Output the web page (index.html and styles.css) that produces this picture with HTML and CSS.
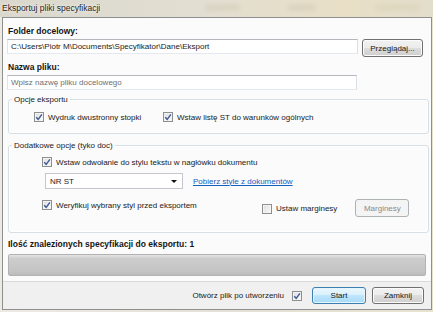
FILE: index.html
```html
<!DOCTYPE html>
<html lang="pl">
<head>
    <meta charset="utf-8">
    <title>Eksportuj pliki specyfikacji</title>
    <link rel="stylesheet" href="styles.css">
</head>
<body>
    <div class="window">
        <div class="titlebar">
            <span class="title">Eksportuj pliki specyfikacji</span>
            <span class="blur blur-1"></span>
            <span class="blur blur-2"></span>
            <span class="blur blur-3"></span>
        </div>
        <div class="client">
            <div class="main">
                <div class="label">Folder docelowy:</div>
                <div class="path-row">
                    <input type="text" class="textbox path" value="C:\Users\Piotr M\Documents\Specyfikator\Dane\Eksport">
                    <button class="btn browse">Przeglądaj...</button>
                </div>

                <div class="label">Nazwa pliku:</div>
                <input type="text" class="textbox name" placeholder="Wpisz nazwę pliku docelowego">

                <!-- Opcje eksportu -->
                <fieldset class="group export">
                    <legend>Opcje eksportu</legend>
                    <div class="group-body">
                        <div class="export-row">
                            <label class="check duplex"><span class="box checked"><svg viewBox="0 0 8 8"><path d="M1.2 4.2 L3.2 6.3 L6.9 1.4"/></svg></span>Wydruk dwustronny stopki</label>
                            <label class="check"><span class="box checked"><svg viewBox="0 0 8 8"><path d="M1.2 4.2 L3.2 6.3 L6.9 1.4"/></svg></span>Wstaw listę ST do warunków ogólnych</label>
                        </div>
                    </div>
                </fieldset>

                <!-- Dodatkowe opcje -->
                <fieldset class="group extra">
                    <legend>Dodatkowe opcje (tyko doc)</legend>
                    <div class="group-body">
                        <label class="check"><span class="box checked"><svg viewBox="0 0 8 8"><path d="M1.2 4.2 L3.2 6.3 L6.9 1.4"/></svg></span>Wstaw odwołanie do stylu tekstu w nagłówku dokumentu</label>
                        <div class="style-row">
                            <div class="combo">
                                <span>NR ST</span>
                                <span class="arrow"></span>
                            </div>
                            <a href="#" class="link">Pobierz style z dokumentów</a>
                        </div>
                        <div class="verify-row">
                            <label class="check verify"><span class="box checked"><svg viewBox="0 0 8 8"><path d="M1.2 4.2 L3.2 6.3 L6.9 1.4"/></svg></span>Weryfikuj wybrany styl przed eksportem</label>
                            <label class="check margins"><span class="box"></span>Ustaw marginesy</label>
                            <button class="btn disabled margins-btn">Marginesy</button>
                        </div>
                    </div>
                </fieldset>

                <div class="label count">Ilość znalezionych specyfikacji do eksportu: 1</div>
                <div class="progress"></div>
            </div>

            <div class="footer">
                <label class="check open-after">Otwórz plik po utworzeniu<span class="box checked"><svg viewBox="0 0 8 8"><path d="M1.2 4.2 L3.2 6.3 L6.9 1.4"/></svg></span></label>
                <button class="btn default start">Start</button>
                <button class="btn close">Zamknij</button>
            </div>
        </div>
    </div>
</body>
</html>
```

FILE: styles.css
```css
/* Okno dialogowe - styl Windows 7 */

body {
    margin: 0;
    font-family: "Liberation Sans", Arial, sans-serif;
    font-size: 8px;
    color: #1a1a1a;
    background: #e6e3da;
}

.window {
    width: 433px;
    height: 312px;
    display: flex;
    flex-direction: column;
    overflow: hidden;
    background: linear-gradient(to right, #eceae3, #e4e1d7 50%, #e8e2cf);
}

.titlebar {
    position: relative;
    height: 17px;
    line-height: 17px;
    padding-left: 2px;
    font-size: 8.5px;
    color: #262626;
    background: linear-gradient(to right, #dad7cd, #e2ded2 45%, #e8dfc6 80%, #e3ddcc);
    overflow: hidden;
}

.title {
    position: relative;
    z-index: 1;
    text-shadow: 0 0 4px #f4f2ec, 0 0 2px #f4f2ec;
}

/* rozmyte tlo szkla Aero */
.blur {
    position: absolute;
    top: 4px;
    height: 7px;
    border-radius: 4px;
    background: #cfc8b4;
    filter: blur(2px);
    opacity: 0.45;
}

.blur-1 { left: 205px; width: 35px; }
.blur-2 { left: 288px; width: 28px; }
.blur-3 { left: 375px; width: 45px; background: #d8cfb4; }

.client {
    flex: 1;
    margin: 0 1px 2px 2px;
    border: 1px solid #8d8f91;
    display: flex;
    flex-direction: column;
    background: #fbfbfb;
}

.main {
    flex: 1;
    padding: 8px 2px 0 4px;
}

.label {
    font-weight: bold;
    font-size: 8.5px;
    line-height: 11px;
    padding-left: 1px;
    color: #141414;
}

.path-row {
    display: flex;
    align-items: flex-start;
    margin-top: 2px;
}

.textbox {
    display: block;
    box-sizing: border-box;
    height: 15px;
    margin: 0;
    padding: 0 3px;
    border: 1px solid;
    border-color: #b5b7bd #dbdfe6 #e3e9ef #e2e3ea;
    background: #fff;
    font-family: inherit;
    font-size: 8px;
    color: #1a1a1a;
    outline: none;
}

.textbox::placeholder {
    color: #6f6f6f;
}

.path {
    width: 351px;
}

.name {
    width: 350px;
    margin-top: 2px;
}

.path-row + .label {
    margin-top: 5px;
}

.btn {
    box-sizing: border-box;
    height: 18px;
    padding: 0;
    border: 1px solid #707070;
    border-radius: 3px;
    background: linear-gradient(#f2f2f2 0%, #ebebeb 50%, #dddddd 50%, #cfcfcf 100%);
    box-shadow: inset 0 0 0 1px #fbfbfb;
    font-family: inherit;
    font-size: 8px;
    color: #1a1a1a;
}

.browse {
    width: 61px;
    margin-left: 4px;
}

.group {
    margin: 4px 0 0 1px;
    padding: 0;
    border: 1px solid #d5dfe5;
    border-radius: 3px;
    box-shadow: inset 0 0 0 1px #fff;
}

.group legend {
    margin-left: 3px;
    padding: 0 2px;
    line-height: 11px;
    font-size: 8px;
}

.check {
    display: flex;
    align-items: center;
    height: 12px;
    white-space: nowrap;
}

.box {
    box-sizing: border-box;
    flex: none;
    width: 10px;
    height: 10px;
    margin-right: 4px;
    border: 1px solid #8e8f8f;
    background: linear-gradient(135deg, #dcdcdc, #fbfbfb);
    box-shadow: inset 0 0 0 1px #f4f4f4;
}

.box svg {
    display: block;
    width: 8px;
    height: 8px;
}

.box svg path {
    fill: none;
    stroke: #3d5a94;
    stroke-width: 1.4;
}

.export .group-body {
    padding: 6px 0 10px 25px;
}

.export-row {
    display: flex;
}

.duplex {
    width: 129px;
}

.extra {
    margin-top: 6px;
}

.extra .group-body {
    padding: 5px 0 15px 33px;
}

.style-row {
    display: flex;
    align-items: center;
    margin: 5px 0 0 3px;
}

.combo {
    box-sizing: border-box;
    width: 138px;
    height: 16px;
    display: flex;
    align-items: center;
    justify-content: space-between;
    padding: 0 5px 0 4px;
    border: 1px solid #c3c6cc;
    background: #fff;
}

.arrow {
    width: 0;
    height: 0;
    border-left: 3px solid transparent;
    border-right: 3px solid transparent;
    border-top: 3px solid #111;
}

.link {
    margin-left: 10px;
    color: #1560c0;
    text-decoration: underline;
}

.verify-row {
    display: flex;
    align-items: center;
    height: 18px;
    margin-top: 10px;
}

.verify {
    align-self: flex-start;
    width: 220px;
}

.margins {
    margin-top: 1px;
}

.margins-btn {
    width: 54px;
    margin-left: 18px;
}

.btn.disabled {
    border-color: #adb2b5;
    background: #f4f4f4;
    box-shadow: none;
    color: #8a8a8a;
}

.count {
    margin-top: 6px;
}

.progress {
    box-sizing: border-box;
    height: 22px;
    margin: 4px 3px 0 1px;
    border: 1px solid #b2b2b2;
    border-radius: 2px;
    background: linear-gradient(#e4e4e4 0%, #cdcdcd 18%, #c4c4c4 80%, #bbbbbb 100%);
}

.footer {
    height: 27px;
    display: flex;
    align-items: center;
    justify-content: flex-end;
    padding-right: 7px;
    border-top: 1px solid #dadada;
    background: #f0f0f0;
}

.open-after .box {
    margin: 0 0 0 8px;
}

.start {
    width: 54px;
    height: 17px;
    margin-left: 10px;
    border-color: #3c7fb1;
    background: linear-gradient(#eaf6fd 0%, #d9f0fc 50%, #bee6fd 50%, #a7d9f5 100%);
    box-shadow: inset 0 0 0 1px #e6f4fc;
}

.close {
    width: 52px;
    height: 17px;
    margin-left: 6px;
}
```
